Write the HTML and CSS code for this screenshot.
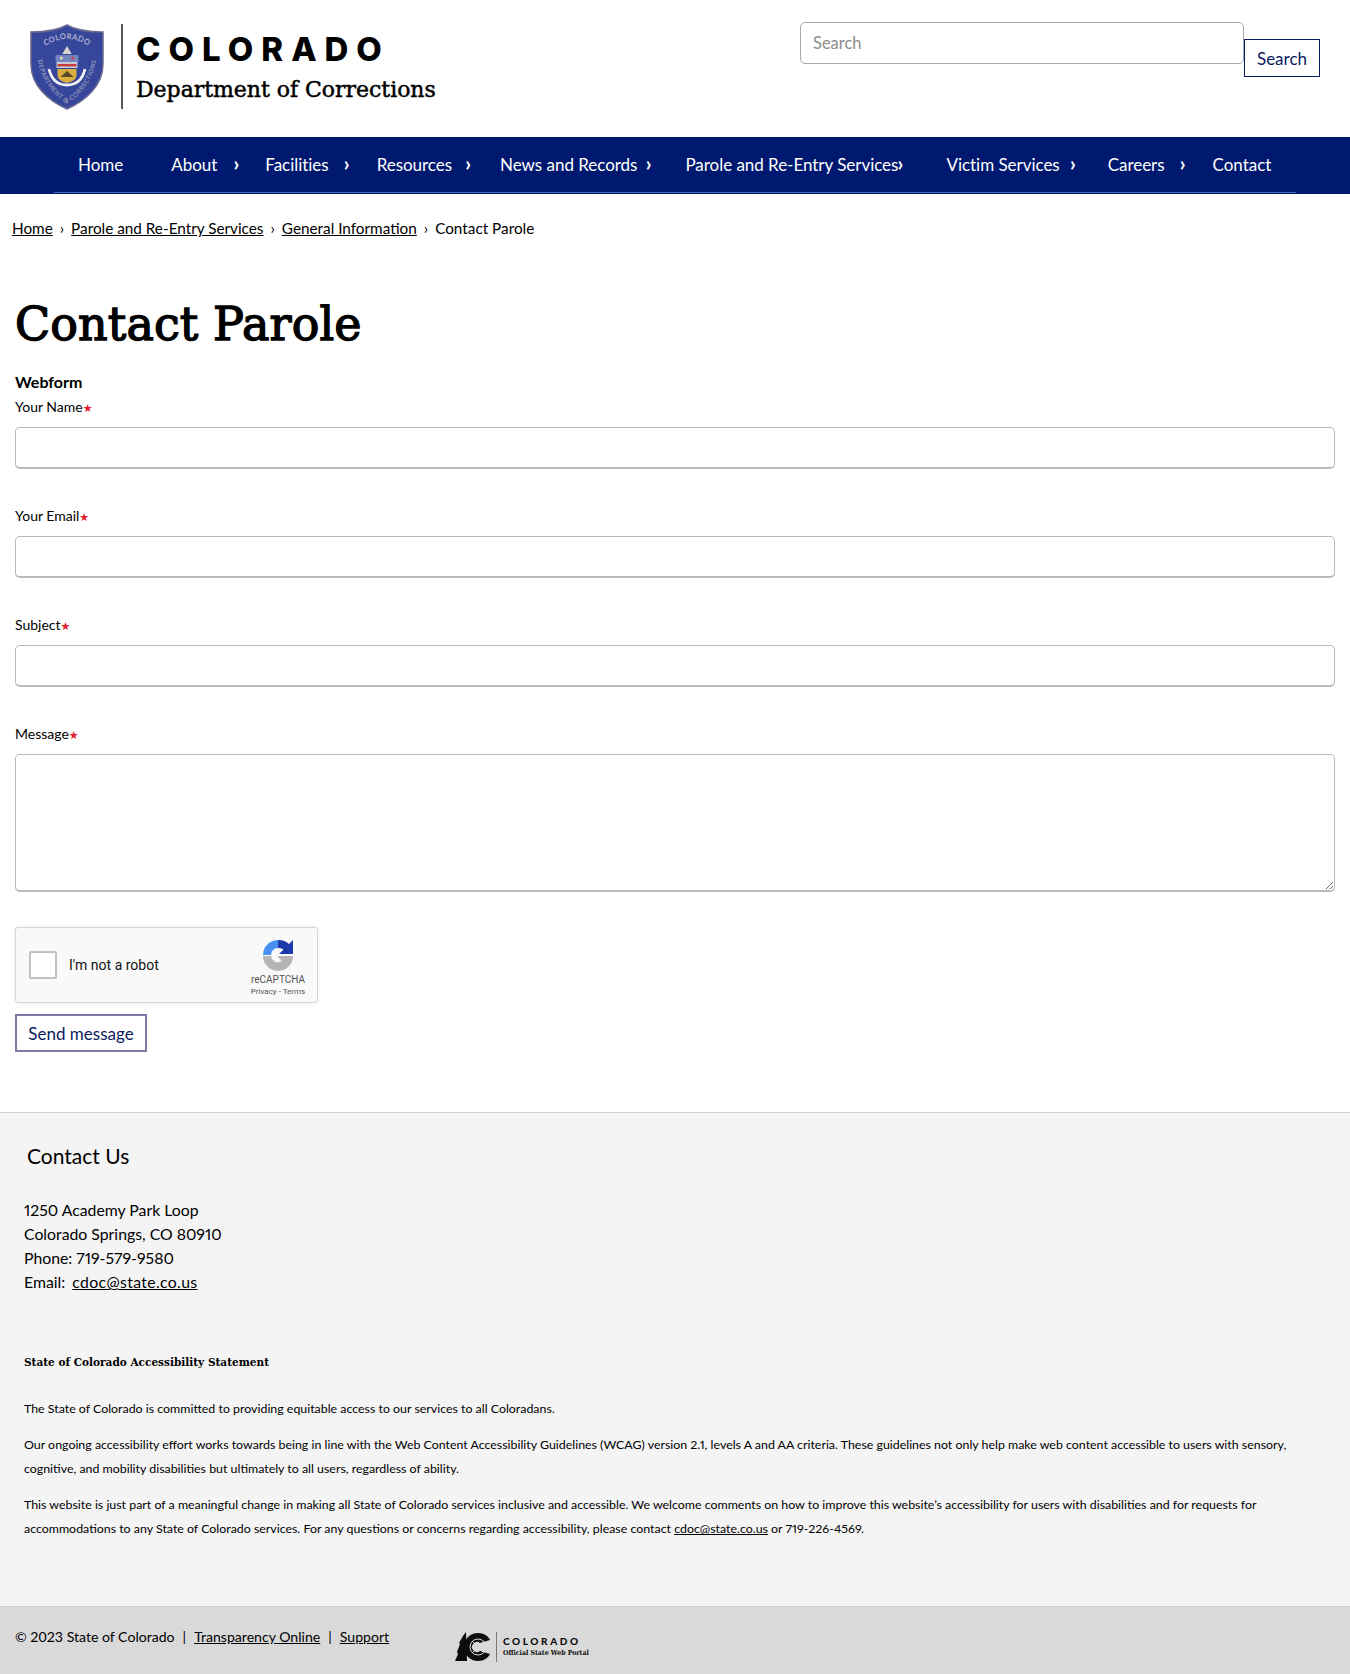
FILE: index.html
```html
<!DOCTYPE html>
<html lang="en">
<head>
<meta charset="utf-8">
<title>Contact Parole</title>
<link rel="stylesheet" href="styles.css">
</head>
<body>
<header class="site-header">
  <a class="brand" href="#">
    <svg class="seal" width="74" height="86" viewBox="0 0 78 86" preserveAspectRatio="none" aria-hidden="true">
      <defs>
        <path id="arc-top" d="M9 27 Q39 3 69 27"/>
        <path id="arc-bot" d="M7 22 C7 50 20 68 39 80 C58 68 71 50 71 22"/>
      </defs>
      <path d="M39 1 C48 6 62 8 77 8 L77 40 C77 62 58 77 39 85 C20 77 1 62 1 40 L1 8 C16 8 30 6 39 1 Z" fill="#36469a" stroke="#6f6c93" stroke-width="1.5"/>
      <text class="seal-arc"><textPath href="#arc-top" startOffset="50%" text-anchor="middle">COLORADO</textPath></text>
      <text class="seal-arc seal-arc-sm"><textPath href="#arc-bot" startOffset="50%" text-anchor="middle">DEPARTMENT OF CORRECTIONS</textPath></text>
      <path d="M39 22 l5 8 h-10 Z" fill="#d8d6cf"/>
      <path d="M27 31 h24 v7 h-24 Z" fill="#7283bd"/>
      <circle cx="33" cy="34" r="1.6" fill="#e8d9a8"/>
      <circle cx="45" cy="34" r="1.6" fill="#c8404a"/>
      <rect x="28" y="38" width="22" height="6" fill="#c9ccd6"/>
      <rect x="29" y="40" width="20" height="2.4" fill="#c63a44"/>
      <path d="M29 45 h20 v6 q0 6 -10 8 q-10 -2 -10 -8 Z" fill="#d9ad3f"/>
      <path d="M32 53 l7 -6 l7 6 Z" fill="#5c4a2a"/>
      <path d="M20 45 Q24 61 39 61 Q54 61 58 45" fill="none" stroke="#eef0f4" stroke-width="3"/>
    </svg>
    <span class="brand-rule"></span>
    <span class="brand-text">
      <span class="brand-state">COLORADO</span>
      <span class="brand-dept">Department of Corrections</span>
    </span>
  </a>
  <form class="site-search">
    <input class="search-input" type="text" placeholder="Search">
    <button class="btn search-btn" type="button">Search</button>
  </form>
</header>

<nav class="main-nav">
  <ul class="nav-list">
    <li class="nav-item"><a href="#">Home</a></li>
    <li class="nav-item"><a href="#">About</a><span class="caret c-about">›</span></li>
    <li class="nav-item"><a href="#">Facilities</a><span class="caret c-fac">›</span></li>
    <li class="nav-item"><a href="#">Resources</a><span class="caret c-res">›</span></li>
    <li class="nav-item"><a href="#">News and Records</a><span class="caret c-news">›</span></li>
    <li class="nav-item"><a href="#">Parole and Re-Entry Services</a><span class="caret c-par">›</span></li>
    <li class="nav-item"><a href="#">Victim Services</a><span class="caret c-vic">›</span></li>
    <li class="nav-item"><a href="#">Careers</a><span class="caret c-car">›</span></li>
    <li class="nav-item"><a href="#">Contact</a></li>
  </ul>
</nav>

<ol class="breadcrumb">
  <li><a href="#">Home</a></li>
  <li class="sep">›</li>
  <li><a href="#">Parole and Re-Entry Services</a></li>
  <li class="sep">›</li>
  <li><a href="#">General Information</a></li>
  <li class="sep">›</li>
  <li>Contact Parole</li>
</ol>

<main class="content">
  <h1 class="page-title">Contact Parole</h1>
  <h2 class="form-title">Webform</h2>
  <form class="webform">
    <div class="field">
      <label class="field-label">Your Name<span class="req">★</span></label>
      <input class="field-input" type="text">
    </div>
    <div class="field">
      <label class="field-label">Your Email<span class="req">★</span></label>
      <input class="field-input" type="text">
    </div>
    <div class="field">
      <label class="field-label">Subject<span class="req">★</span></label>
      <input class="field-input" type="text">
    </div>
    <div class="field">
      <label class="field-label">Message<span class="req">★</span></label>
      <textarea class="field-area"></textarea>
    </div>
    <div class="captcha">
      <span class="captcha-box"></span>
      <span class="captcha-label">I'm not a robot</span>
      <span class="captcha-brand">
        <svg width="32" height="32" viewBox="0 0 32 32" aria-hidden="true">
          <path d="M16 1 A15 15 0 0 0 1.5 12 L1 16 L9 16 A7 7 0 0 1 16 9 Z" fill="#4a90f2"/>
          <path d="M16 1 A15 15 0 0 1 27 5 L31 1 L31 15 L17 15 L21.5 10.5 A7 7 0 0 0 16 9 Z" fill="#1c3aa9"/>
          <path d="M1 17 L9 17 A7 7 0 0 0 20 22 L15 17 L31 17 A15 15 0 0 1 1 17 Z" fill="#b5b5b5"/>
        </svg>
        <span class="captcha-name">reCAPTCHA</span>
        <span class="captcha-links">Privacy - Terms</span>
      </span>
    </div>
    <button class="btn send-btn" type="button">Send message</button>
  </form>
</main>

<footer class="site-footer">
  <h2 class="footer-title">Contact Us</h2>
  <address class="footer-address">
    1250 Academy Park Loop<br>
    Colorado Springs, CO 80910<br>
    Phone: 719-579-9580<br>
    Email: <a href="#">cdoc@state.co.us</a>
  </address>
  <h3 class="a11y-title">State of Colorado Accessibility Statement</h3>
  <p class="a11y-text">The State of Colorado is committed to providing equitable access to our services to all Coloradans.</p>
  <p class="a11y-text">Our ongoing accessibility effort works towards being in line with the Web Content Accessibility Guidelines (WCAG) version 2.1, levels A and AA criteria. These guidelines not only help make web content accessible to users with sensory, cognitive, and mobility disabilities but ultimately to all users, regardless of ability.</p>
  <p class="a11y-text">This website is just part of a meaningful change in making all State of Colorado services inclusive and accessible. We welcome comments on how to improve this website’s accessibility for users with disabilities and for requests for accommodations to any State of Colorado services. For any questions or concerns regarding accessibility, please contact <a href="#">cdoc@state.co.us</a> or 719-226-4569.</p>
</footer>

<div class="bottom-bar">
  <p class="legal">© 2023 State of Colorado<span class="pipe">|</span><a href="#">Transparency Online</a><span class="pipe">|</span><a href="#">Support</a></p>
  <a class="portal" href="#">
    <svg width="36" height="30" viewBox="0 0 36 30" aria-hidden="true">
      <path d="M0 29 L3 22 L2 20 L5 12 L4 11 L8 4 L11 0 L12 29 Z" fill="#0c0c0c"/>
      <path d="M23 1 A14 14 0 1 0 23 29 C29 29 33 26 35 22 L25 19 A5 5 0 1 1 25 11 L35 8 C33 4 29 1 23 1 Z" fill="#0c0c0c"/>
      <circle cx="23" cy="15" r="8" fill="none" stroke="#d9d9d9" stroke-width="1"/>
      <path d="M17 9 L29 21 M29 9 L17 21" stroke="#d9d9d9" stroke-width="1"/>
    </svg>
    <span class="portal-rule"></span>
    <span class="portal-text">
      <span class="portal-state">COLORADO</span>
      <span class="portal-sub">Official State Web Portal</span>
    </span>
  </a>
</div>
</body>
</html>
```
FILE: styles.css
```css
* { box-sizing: border-box; }
html, body { margin: 0; padding: 0; }
body { font-family: "Lato", "Open Sans", sans-serif; color: #000; background: #fff; font-size: 16px; }
a { color: inherit; }

.site-header { height: 137px; display: flex; justify-content: space-between; padding: 22px 30px 0 30px; }
.brand { display: flex; align-items: flex-start; text-decoration: none; color: #000; }
.seal { margin-top: 2px; }
.seal-arc { font-family: "Lato", sans-serif; font-size: 8px; font-weight: 700; fill: #aeb1cf; letter-spacing: .4px; }
.seal-arc-sm { font-size: 6.5px; fill: #8f92bb; }
.brand-rule { width: 2px; height: 85px; background: #555; margin: 2px 13px 0 17px; }
.brand-text { display: flex; flex-direction: column; }
.brand-state { font-family: "Inter", sans-serif; font-weight: 800; font-size: 33px; line-height: 36px; letter-spacing: 8px; margin-top: 9px; white-space: nowrap; }
.brand-dept { font-family: "DejaVu Serif", serif; font-size: 22px; line-height: 28px; margin-top: 9px; letter-spacing: -.03px; -webkit-text-stroke: .5px #000; white-space: nowrap; }

.site-search { display: flex; align-items: flex-start; }
.search-input { width: 444px; height: 42px; border: 1px solid #a9a9ad; border-radius: 5px; padding: 0 12px; font: 16.5px "Lato", sans-serif; background: #fff; }
.search-input::placeholder { color: #8d8d8d; }
.btn { background: #fff; border: 1px solid #0a1a5c; color: #0a1a5c; font: 17px "Lato", sans-serif; padding: 0; white-space: nowrap; }
.search-btn { height: 38px; margin-top: 17px; width: 76px; }

.main-nav { background: #001970; height: 57px; }
.nav-list { list-style: none; margin: 0 0 0 54px; padding: 0; width: 1242px; height: 56px; display: flex; border-bottom: 1px solid #3d6db0; }
.nav-item { display: flex; align-items: center; padding: 0 24px; color: #fff; font-size: 17px; letter-spacing: -.03px; position: relative; white-space: nowrap; }
.nav-item a { text-decoration: none; color: #fff; }
.caret { position: absolute; top: 15px; font-size: 20px; line-height: 22px; font-weight: 700; }
.c-about { right: 2px; }
.c-fac { right: 3px; }
.c-res { right: 5px; }
.c-news { right: 10px; }
.c-par { right: 19px; }
.c-vic { right: 8px; }
.c-car { right: 3px; }

.breadcrumb { list-style: none; margin: 0; padding: 23px 12px 0; display: flex; gap: 7px; font-size: 15.3px; line-height: 22px; height: 62px; white-space: nowrap; }

.content { padding: 0 15px; }
.page-title { font-family: "DejaVu Serif", serif; font-weight: 400; font-size: 46px; line-height: 58px; margin: 39px 0 0; letter-spacing: .1px; -webkit-text-stroke: 1.4px #000; }
.form-title { font-size: 16px; font-weight: 700; line-height: 22px; margin: 18px 0 0; }
.webform { display: flex; flex-direction: column; align-items: flex-start; padding-top: 3px; }
.field { width: 100%; margin-bottom: 36px; }
.field-label { display: block; font-size: 14px; line-height: 20px; height: 31px; padding-top: 1px; }
.req { color: #e0202c; margin-left: 0; font-size: 11px; font-family: "DejaVu Sans", sans-serif; }
.field-input { display: block; width: 100%; height: 42px; border: 1px solid #b9b9b9; border-bottom-width: 2px; border-radius: 5px; background: #fff; }
.field-area { display: block; width: 100%; height: 138px; border: 1px solid #b9b9b9; border-bottom-width: 2px; border-radius: 5px; background: #fff; }

.captcha { width: 303px; height: 76px; margin-top: -1px; background: #f9f9f9; border: 1px solid #d6d6d6; border-radius: 3px; box-shadow: 0 0 4px rgba(0,0,0,.08); display: flex; align-items: center; padding-left: 13px; position: relative; font-family: "Roboto", sans-serif; }
.captcha-box { width: 28px; height: 28px; background: #fff; border: 2px solid #c1c1c1; border-radius: 2px; }
.captcha-label { font-size: 14px; margin-left: 12px; color: #111; }
.captcha-brand { margin-left: auto; width: 70px; margin-right: 4px; padding-top: 6px; display: flex; flex-direction: column; align-items: center; color: #555; }
.captcha-name { font-size: 10px; line-height: 12px; margin-top: 3px; }
.captcha-links { font-size: 8px; line-height: 12px; }
.send-btn { height: 38px; width: 132px; margin-top: 11px; border: 2px solid #7d79a8; color: #0a1a5c; }

.site-footer { margin-top: 60px; background: #f4f4f5; border-top: 1px solid #cfcfcf; height: 495px; padding: 29px 24px 0; border-bottom: 1px solid #cfcfcf; font-variant-numeric: proportional-nums; }
.footer-title { font-size: 21px; font-weight: 400; line-height: 28px; margin: 0 0 0 3px; }
.footer-address { font-style: normal; font-size: 15.8px; line-height: 24px; margin-top: 28px; }
.footer-address a { letter-spacing: .35px; margin-left: 3px; }
.a11y-title { font-family: "DejaVu Serif Condensed", "DejaVu Serif", serif; font-size: 11.7px; font-weight: 700; line-height: 18px; margin: 59px 0 0; }
.a11y-text { font-size: 12.38px; line-height: 24px; margin: 0 0 12px; }
.a11y-title + .a11y-text { margin-top: 26px; }

.bottom-bar { background: #d9d9d9; height: 68px; display: flex; align-items: flex-start; padding: 0 15px; }
.legal { margin: 20px 0 0; font-size: 14.1px; line-height: 20px; width: 440px; white-space: nowrap; }
.pipe { margin: 0 8px; }
.portal { display: flex; align-items: center; text-decoration: none; color: #0c0c0c; margin-top: 24px; height: 32px; gap: 5px; }
.portal-rule { width: 1px; height: 30px; background: #777; }
.portal-text { display: flex; flex-direction: column; margin-left: 1px; }
.portal-state { font-weight: 900; font-size: 10px; line-height: 13px; letter-spacing: 2.6px; }
.portal-sub { font-family: "DejaVu Serif Condensed", "DejaVu Serif", serif; font-size: 6.9px; line-height: 11px; font-weight: 700; white-space: nowrap; }
```
